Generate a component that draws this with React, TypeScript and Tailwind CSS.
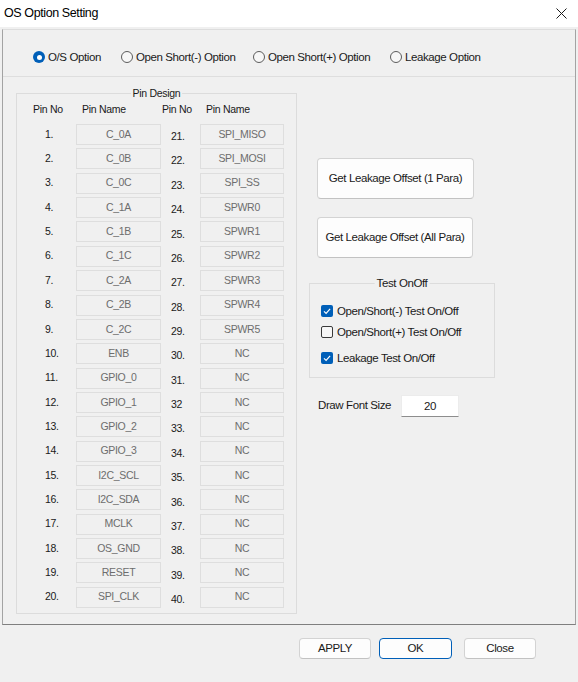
import React, { useState } from 'react';

const pinsLeft = [
  'C_0A', 'C_0B', 'C_0C', 'C_1A', 'C_1B', 'C_1C', 'C_2A', 'C_2B', 'C_2C', 'ENB',
  'GPIO_0', 'GPIO_1', 'GPIO_2', 'GPIO_3', 'I2C_SCL', 'I2C_SDA', 'MCLK', 'OS_GND', 'RESET', 'SPI_CLK',
];
const pinsRight = [
  'SPI_MISO', 'SPI_MOSI', 'SPI_SS', 'SPWR0', 'SPWR1', 'SPWR2', 'SPWR3', 'SPWR4', 'SPWR5', 'NC',
  'NC', 'NC', 'NC', 'NC', 'NC', 'NC', 'NC', 'NC', 'NC', 'NC',
];

const options = [
  { id: 'os', label: 'O/S Option', width: 'w-[88px]' },
  { id: 'minus', label: 'Open Short(-) Option', width: 'w-[132px]' },
  { id: 'plus', label: 'Open Short(+) Option', width: 'w-[137px]' },
  { id: 'leak', label: 'Leakage Option', width: 'w-[120px]' },
];

const Radio = ({ checked }: { checked: boolean }) =>
  checked ? (
    <span className="w-[12px] h-[12px] rounded-full bg-[#005fb8] flex items-center justify-center shrink-0">
      <span className="w-[5px] h-[5px] rounded-full bg-white" />
    </span>
  ) : (
    <span className="w-[12px] h-[12px] rounded-full border border-[#5c5c5c] bg-[#f7f7f7] shrink-0" />
  );

const Check = ({ checked }: { checked: boolean }) =>
  checked ? (
    <span className="w-[12px] h-[12px] rounded-[2px] bg-[#005fb8] flex items-center justify-center shrink-0">
      <svg width="12" height="12" viewBox="0 0 12 12">
        <polyline points="3,6.3 5.1,8.4 9.1,3.9" fill="none" stroke="white" strokeWidth="1.2" />
      </svg>
    </span>
  ) : (
    <span className="w-[12px] h-[12px] rounded-[2px] border border-[#3a3a3a] bg-[#f7f7f7] shrink-0" />
  );

const PinBox = ({ name }: { name: string }) => (
  <div className="h-[21px] border border-[#dedede] bg-[#f0f0f0] flex items-center justify-center text-[#6d6d6d]">
    {name}
  </div>
);

export default function App() {
  const [option, setOption] = useState('os');
  const [tests, setTests] = useState([true, false, true]);
  const [fontSize, setFontSize] = useState('20');

  const toggle = (i: number) => setTests(tests.map((t, j) => (j === i ? !t : t)));

  return (
    <div className="w-[578px] h-[682px] bg-[#f0f0f0] flex flex-col font-['Liberation_Sans',Arial,sans-serif] text-[#1a1a1a] overflow-hidden">
      {/* Title bar */}
      <div className="h-[27px] bg-white flex items-center shrink-0">
        <span className="pl-[4px] text-[12.5px] tracking-[-0.4px] text-black">OS Option Setting</span>
        <svg className="ml-auto mr-[11px]" width="11" height="11" viewBox="0 0 11 11">
          <path d="M0.5 0.5 L10.5 10.5 M10.5 0.5 L0.5 10.5" stroke="#1a1a1a" strokeWidth="1" />
        </svg>
      </div>

      {/* Main frame */}
      <div className="mt-[2px] ml-[2px] w-[574px] h-[596px] border-x border-x-[#a3a3a3] border-t border-t-[#dddddd] border-b border-b-[#7f7f7f] flex flex-col shrink-0">
        {/* Option radios */}
        <div className="h-[47px] border-b border-[#dedede] pt-[21px] pl-[30px] flex items-start text-[11.5px] tracking-[-0.4px]">
          {options.map(o => (
            <button
              key={o.id}
              className={`${o.width} h-[12px] flex items-center gap-[3px] text-left`}
              onClick={() => setOption(o.id)}
            >
              <Radio checked={option === o.id} />
              <span className="leading-[12px] whitespace-nowrap">{o.label}</span>
            </button>
          ))}
        </div>

        <div className="flex-1 flex items-start">
          {/* Pin Design group */}
          <div className="relative ml-[13px] mt-[16px] w-[281px] h-[521px] border border-[#dcdcdc] text-[10.5px] tracking-[-0.3px]">
            <span className="absolute -top-[7px] left-1/2 -translate-x-1/2 px-[2px] bg-[#f0f0f0] leading-[13px] whitespace-nowrap">
              Pin Design
            </span>
            <div className="mt-[6px] h-[20px] grid grid-cols-[59px_85px_39px_84px] items-center">
              <span className="pl-[16px]">Pin No</span>
              <span className="pl-[6px]">Pin Name</span>
              <span className="pl-[1px]">Pin No</span>
              <span className="pl-[6px]">Pin Name</span>
            </div>
            <div className="mt-[4px] flex flex-col gap-[3.37px]">
              {pinsLeft.map((name, i) => (
                <div key={i} className="h-[21px] grid grid-cols-[59px_85px_39px_84px] items-center">
                  <span className="pl-[28px]">{i + 1}.</span>
                  <PinBox name={name} />
                  {/* pin 32 has no dot in the original dialog */}
                  <span className="pl-[10px] pt-[5px]">{i + 21 === 32 ? '32' : `${i + 21}.`}</span>
                  <PinBox name={pinsRight[i]} />
                </div>
              ))}
            </div>
          </div>

          {/* Right column */}
          <div className="ml-[12px] flex flex-col">
            <button className="ml-[8px] mt-[81px] w-[157px] h-[41px] rounded-[4px] bg-[#fdfdfd] border border-[#d3d3d3] border-b-[#c2c2c2] text-[11.5px] tracking-[-0.4px]">
              Get Leakage Offset (1 Para)
            </button>
            <button className="ml-[8px] mt-[18px] w-[156px] h-[41px] rounded-[4px] bg-[#fdfdfd] border border-[#d3d3d3] border-b-[#c2c2c2] text-[11.5px] tracking-[-0.4px]">
              Get Leakage Offset (All Para)
            </button>

            <div className="relative mt-[25px] w-[186px] h-[95px] border border-[#dcdcdc] pl-[11px] pt-[21px] text-[11.5px] tracking-[-0.4px]">
              <span className="absolute -top-[7px] left-1/2 -translate-x-1/2 px-[2px] bg-[#f0f0f0] leading-[13px] whitespace-nowrap">
                Test OnOff
              </span>
              {['Open/Short(-) Test On/Off', 'Open/Short(+) Test On/Off', 'Leakage Test On/Off'].map((label, i) => (
                <button
                  key={label}
                  className={`h-[12px] flex items-center gap-[4px] ${i === 1 ? 'mt-[9px]' : i === 2 ? 'mt-[14px]' : ''}`}
                  onClick={() => toggle(i)}
                >
                  <Check checked={tests[i]} />
                  <span className="leading-[12px] whitespace-nowrap">{label}</span>
                </button>
              ))}
            </div>

            <div className="mt-[17px] pl-[9px] flex items-center text-[11.5px] tracking-[-0.4px]">
              <span className="w-[83px] whitespace-nowrap">Draw Font Size</span>
              <input
                className="w-[58px] h-[22px] bg-white border border-[#ececec] border-b-[#8d8d8d] text-center outline-none text-[11.5px]"
                value={fontSize}
                onChange={e => setFontSize(e.target.value)}
              />
            </div>
          </div>
        </div>
      </div>

      {/* Footer buttons */}
      <div className="pt-[13px] pr-[42px] flex justify-end text-[11.5px] tracking-[-0.4px]">
        <button className="w-[72px] h-[21px] rounded-[4px] bg-[#fdfdfd] border border-[#d3d3d3] border-b-[#c2c2c2]">APPLY</button>
        <button className="ml-[8px] w-[73px] h-[21px] rounded-[4px] bg-[#fdfdfd] border border-[#005fb8]">OK</button>
        <button className="ml-[12px] w-[72px] h-[21px] rounded-[4px] bg-[#fdfdfd] border border-[#d3d3d3] border-b-[#c2c2c2]">Close</button>
      </div>
    </div>
  );
}
